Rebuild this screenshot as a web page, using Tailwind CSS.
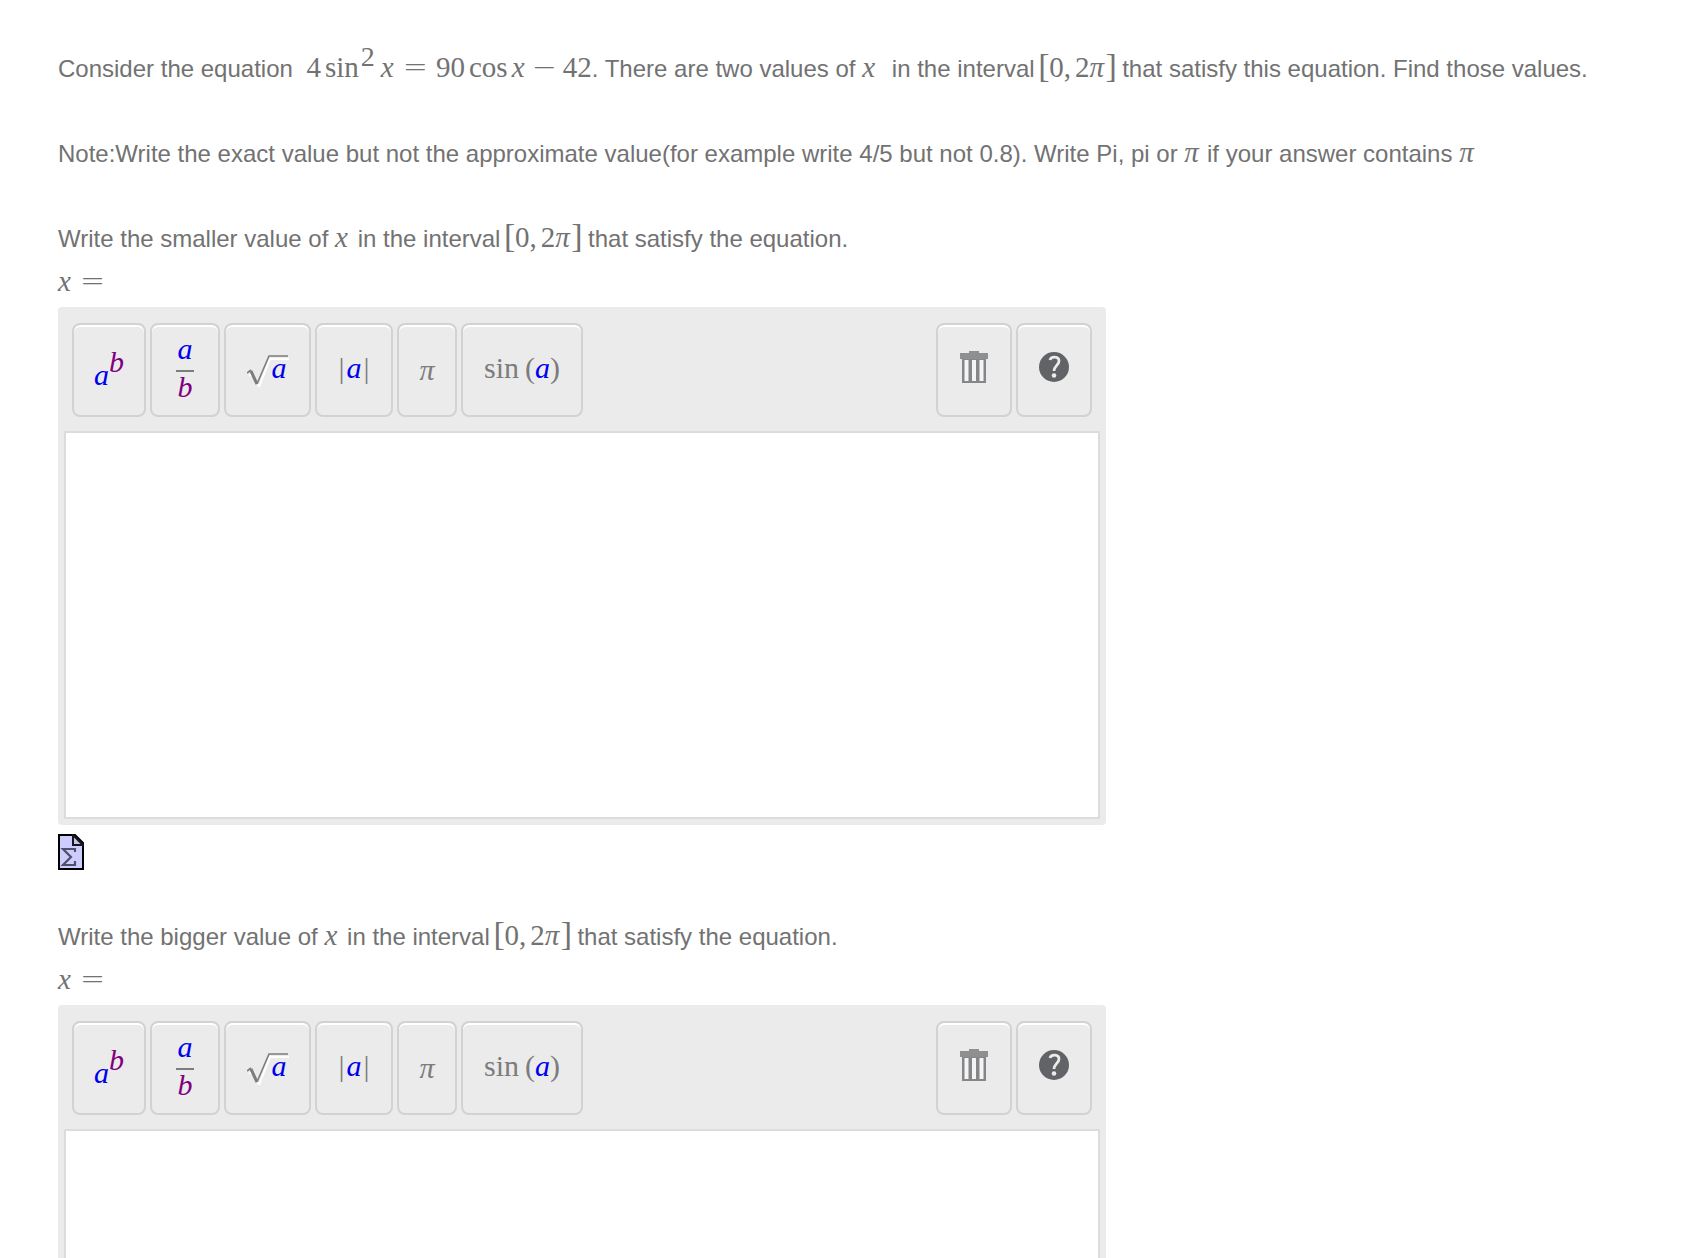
<!DOCTYPE html>
<html lang="en">
  <head>
    <meta charset="UTF-8" />
    <meta name="viewport" content="width=device-width, initial-scale=1.0" />
    <title>Trigonometric equation</title>
    <script src="https://cdn.jsdelivr.net/npm/@tailwindcss/browser@4"></script>
  </head>
  <body class="bg-white text-[#727272] font-['Liberation_Sans',Arial,sans-serif] text-2xl leading-[43px]">
    <main class="pt-[47px] pl-[58px] pr-12">
      <!-- Question -->
      <p class="mb-[42px]">
        Consider the equation
        <span class="ml-[7px] inline-flex items-baseline font-['Liberation_Serif',serif] text-[29px] leading-none">
          <span>4</span><span class="ml-1">sin</span><sup class="ml-[2px] top-[-11px] text-[28px] leading-none">2</sup>
          <i class="ml-[6px] w-4">x</i><span class="ml-[6px] font-['DejaVu_Sans',sans-serif] text-[30px] leading-none font-extralight">=</span>
          <span class="ml-2">90</span><span class="ml-1">cos</span><i class="ml-1 w-4">x</i>
          <span class="ml-1 mr-[6px] font-['DejaVu_Sans',sans-serif] text-[30px] leading-none font-extralight">−</span><span>42</span></span>. There are two values of
        <i class="inline-block w-4 font-['Liberation_Serif',serif] text-[29px] leading-none">x</i>
        <span class="ml-[7px]">in the interval</span>
        <span class="inline-flex items-baseline font-['Liberation_Serif',serif] text-[29px] leading-none"><span class="-ml-[3px] w-[11px] text-[34px] leading-none">[</span><span>0,</span><span class="ml-1">2</span><i class="w-4">π</i><span class="w-[10px] text-[34px] leading-none">]</span></span>
        that satisfy this equation. Find those values.
      </p>
      <p class="mb-[42px]">
        Note:Write the exact value but not the approximate value(for example write 4/5 but not 0.8). Write Pi, pi or
        <i class="inline-block w-4 font-['Liberation_Serif',serif] text-[29px] leading-none">π</i>
        if your answer contains
        <i class="inline-block w-4 font-['Liberation_Serif',serif] text-[29px] leading-none">π</i>
      </p>

      <!-- Smaller value -->
      <section class="mb-[45px]">
        <p>
          Write the smaller value of
          <i class="inline-block w-4 font-['Liberation_Serif',serif] text-[29px] leading-none">x</i>
          in the interval
          <span class="inline-flex items-baseline font-['Liberation_Serif',serif] text-[29px] leading-none"><span class="-ml-[3px] w-[11px] text-[34px] leading-none">[</span><span>0,</span><span class="ml-1">2</span><i class="w-4">π</i><span class="w-[10px] text-[34px] leading-none">]</span></span>
          that satisfy the equation.
        </p>
        <label for="smaller" class="flex h-[43px] items-baseline font-['Liberation_Serif',serif] text-[29px]">
          <i class="w-4">x</i><span class="ml-[6px] font-['DejaVu_Sans',sans-serif] text-[30px] leading-none font-extralight">=</span>
        </label>
        <div class="mt-1 max-w-[1048px] rounded bg-[#ebebeb] px-[6px] pt-4 pb-[6px]">
          <div class="flex gap-1 px-2 pb-[14px] font-['Liberation_Serif',serif] text-[30px] leading-none text-[#7c7c7c] [text-shadow:2px_2px_0_#fff]">
            <button type="button" aria-label="Exponent" class="flex h-[94px] w-[74px] items-center justify-center rounded-lg border-2 border-[#d2d2d2] shadow-[inset_0_2px_0_#fff]">
              <i class="pt-[10px] text-[#0000ee]">a</i><i class="pb-4 text-[#800080]">b</i>
            </button>
            <button type="button" aria-label="Fraction" class="flex h-[94px] w-[70px] flex-col items-center justify-center rounded-lg border-2 border-[#d2d2d2] pb-1 shadow-[inset_0_2px_0_#fff]">
              <i class="text-[#0000ee]">a</i><span class="mt-[6px] h-[2px] w-[18px] bg-[#7c7c7c]"></span><i class="text-[#800080]">b</i>
            </button>
            <button type="button" aria-label="Square root" class="flex h-[94px] w-[87px] items-center justify-center rounded-lg border-2 border-[#d2d2d2] pt-[2px] shadow-[inset_0_2px_0_#fff]">
              <span class="relative h-[32px] w-[42px] pl-[23px]">
                <svg class="absolute inset-0 h-[32px] w-[42px]" viewBox="0 0 42 32" fill="none">
                  <path d="M1 19l4-3 6 14L22 2h19" stroke="#fff" stroke-width="2" transform="translate(1 2)" />
                  <path d="M0 18l4-3M10 29L22 1h19" stroke="#7c7c7c" stroke-width="1.6" />
                  <path d="M4 16l6 13" stroke="#7c7c7c" stroke-width="3" />
                </svg>
                <i class="relative -mt-[2px] block text-[#0000ee]">a</i>
              </span>
            </button>
            <button type="button" aria-label="Absolute value" class="flex h-[94px] w-[78px] items-center justify-center rounded-lg border-2 border-[#d2d2d2] pb-1 shadow-[inset_0_2px_0_#fff]">
              <span>|</span><i class="mx-[2px] text-[#0000ee]">a</i><span>|</span>
            </button>
            <button type="button" aria-label="Pi" class="flex h-[94px] w-[60px] items-center justify-center rounded-lg border-2 border-[#d2d2d2] shadow-[inset_0_2px_0_#fff]">
              <i>π</i>
            </button>
            <button type="button" aria-label="Sine" class="flex h-[94px] w-[122px] items-center justify-center rounded-lg border-2 border-[#d2d2d2] pb-1 shadow-[inset_0_2px_0_#fff]">
              <span>sin</span><span class="ml-[6px]">(</span><i class="text-[#0000ee]">a</i><span>)</span>
            </button>
            <button type="button" aria-label="Clear" class="ml-auto flex h-[94px] w-[76px] items-center justify-center rounded-lg border-2 border-[#d2d2d2] pb-[6px] shadow-[inset_0_2px_0_#fff]">
              <svg class="h-[32px] w-[28px]" viewBox="0 0 28 32">
                <path d="M9 0h10v2h9v6H0V2h9z" fill="#8e8f91" />
                <path d="M2 8h24v24H2z" fill="#858688" />
                <path d="M4.500 9h4v21h-4zM12 9h4v21h-4zM19.500 9h4v21h-4z" fill="#f4f4f4" />
              </svg>
            </button>
            <button type="button" aria-label="Help" class="flex h-[94px] w-[76px] items-center justify-center rounded-lg border-2 border-[#d2d2d2] pb-[6px] shadow-[inset_0_2px_0_#fff]">
              <svg class="h-[32px] w-[30px]" viewBox="0 0 30 32">
                <circle cx="15" cy="16" r="15" fill="#626366" />
                <path d="M11 9C12 5 20 5 20 10c0 4-5 5-5 10" fill="none" stroke="#ebebeb" stroke-width="2.800" />
                <circle cx="15" cy="24.500" r="2.300" fill="#ebebeb" />
              </svg>
            </button>
          </div>
          <textarea id="smaller" class="block h-[388px] w-full resize-none border-2 border-[#dcdcdc] bg-white p-2 outline-none"></textarea>
        </div>
        <button type="button" aria-label="Preview" class="mt-[9px] block">
          <svg class="h-[36px] w-[26px]" viewBox="0 0 26 36">
            <path d="M1 1h16l8 8v26H1z" fill="#ccccff" stroke="#000" stroke-width="2" />
            <path d="M15 1v10h10z" fill="#c4c4e4" stroke="#15151c" stroke-width="2" />
            <path d="M17 18v-3H5l8 8-8 8h12v-4" fill="none" stroke="#505068" stroke-width="2.200" />
          </svg>
        </button>
      </section>

      <!-- Bigger value -->
      <section class="mb-[45px]">
        <p>
          Write the bigger value of
          <i class="inline-block w-4 font-['Liberation_Serif',serif] text-[29px] leading-none">x</i>
          in the interval
          <span class="inline-flex items-baseline font-['Liberation_Serif',serif] text-[29px] leading-none"><span class="-ml-[3px] w-[11px] text-[34px] leading-none">[</span><span>0,</span><span class="ml-1">2</span><i class="w-4">π</i><span class="w-[10px] text-[34px] leading-none">]</span></span>
          that satisfy the equation.
        </p>
        <label for="bigger" class="flex h-[43px] items-baseline font-['Liberation_Serif',serif] text-[29px]">
          <i class="w-4">x</i><span class="ml-[6px] font-['DejaVu_Sans',sans-serif] text-[30px] leading-none font-extralight">=</span>
        </label>
        <div class="mt-1 max-w-[1048px] rounded bg-[#ebebeb] px-[6px] pt-4 pb-[6px]">
          <div class="flex gap-1 px-2 pb-[14px] font-['Liberation_Serif',serif] text-[30px] leading-none text-[#7c7c7c] [text-shadow:2px_2px_0_#fff]">
            <button type="button" aria-label="Exponent" class="flex h-[94px] w-[74px] items-center justify-center rounded-lg border-2 border-[#d2d2d2] shadow-[inset_0_2px_0_#fff]">
              <i class="pt-[10px] text-[#0000ee]">a</i><i class="pb-4 text-[#800080]">b</i>
            </button>
            <button type="button" aria-label="Fraction" class="flex h-[94px] w-[70px] flex-col items-center justify-center rounded-lg border-2 border-[#d2d2d2] pb-1 shadow-[inset_0_2px_0_#fff]">
              <i class="text-[#0000ee]">a</i><span class="mt-[6px] h-[2px] w-[18px] bg-[#7c7c7c]"></span><i class="text-[#800080]">b</i>
            </button>
            <button type="button" aria-label="Square root" class="flex h-[94px] w-[87px] items-center justify-center rounded-lg border-2 border-[#d2d2d2] pt-[2px] shadow-[inset_0_2px_0_#fff]">
              <span class="relative h-[32px] w-[42px] pl-[23px]">
                <svg class="absolute inset-0 h-[32px] w-[42px]" viewBox="0 0 42 32" fill="none">
                  <path d="M1 19l4-3 6 14L22 2h19" stroke="#fff" stroke-width="2" transform="translate(1 2)" />
                  <path d="M0 18l4-3M10 29L22 1h19" stroke="#7c7c7c" stroke-width="1.6" />
                  <path d="M4 16l6 13" stroke="#7c7c7c" stroke-width="3" />
                </svg>
                <i class="relative -mt-[2px] block text-[#0000ee]">a</i>
              </span>
            </button>
            <button type="button" aria-label="Absolute value" class="flex h-[94px] w-[78px] items-center justify-center rounded-lg border-2 border-[#d2d2d2] pb-1 shadow-[inset_0_2px_0_#fff]">
              <span>|</span><i class="mx-[2px] text-[#0000ee]">a</i><span>|</span>
            </button>
            <button type="button" aria-label="Pi" class="flex h-[94px] w-[60px] items-center justify-center rounded-lg border-2 border-[#d2d2d2] shadow-[inset_0_2px_0_#fff]">
              <i>π</i>
            </button>
            <button type="button" aria-label="Sine" class="flex h-[94px] w-[122px] items-center justify-center rounded-lg border-2 border-[#d2d2d2] pb-1 shadow-[inset_0_2px_0_#fff]">
              <span>sin</span><span class="ml-[6px]">(</span><i class="text-[#0000ee]">a</i><span>)</span>
            </button>
            <button type="button" aria-label="Clear" class="ml-auto flex h-[94px] w-[76px] items-center justify-center rounded-lg border-2 border-[#d2d2d2] pb-[6px] shadow-[inset_0_2px_0_#fff]">
              <svg class="h-[32px] w-[28px]" viewBox="0 0 28 32">
                <path d="M9 0h10v2h9v6H0V2h9z" fill="#8e8f91" />
                <path d="M2 8h24v24H2z" fill="#858688" />
                <path d="M4.500 9h4v21h-4zM12 9h4v21h-4zM19.500 9h4v21h-4z" fill="#f4f4f4" />
              </svg>
            </button>
            <button type="button" aria-label="Help" class="flex h-[94px] w-[76px] items-center justify-center rounded-lg border-2 border-[#d2d2d2] pb-[6px] shadow-[inset_0_2px_0_#fff]">
              <svg class="h-[32px] w-[30px]" viewBox="0 0 30 32">
                <circle cx="15" cy="16" r="15" fill="#626366" />
                <path d="M11 9C12 5 20 5 20 10c0 4-5 5-5 10" fill="none" stroke="#ebebeb" stroke-width="2.800" />
                <circle cx="15" cy="24.500" r="2.300" fill="#ebebeb" />
              </svg>
            </button>
          </div>
          <textarea id="bigger" class="block h-[388px] w-full resize-none border-2 border-[#dcdcdc] bg-white p-2 outline-none"></textarea>
        </div>
      </section>
    </main>
  </body>
</html>
